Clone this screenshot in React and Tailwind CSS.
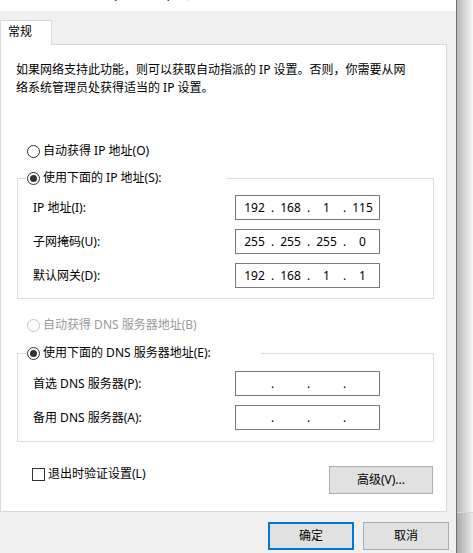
import React from "react";

const FONT = { fontFamily: '"Noto Sans", "Noto Sans CJK SC", sans-serif' };

function Radio({ checked, disabled }) {
  return (
    <span
      className={`flex h-[13px] w-[13px] shrink-0 items-center justify-center rounded-full border bg-white ${
        disabled ? "border-[#c5c5c5]" : "border-[#333333]"
      }`}
    >
      {checked && <span className="h-[7px] w-[7px] rounded-full bg-[#333333]" />}
    </span>
  );
}

function IpBox({ octets }) {
  return (
    <div className="flex h-[25px] w-[145px] items-center border border-[#7a7a7a] bg-white pl-[3px] leading-[16px]">
      {[0, 1, 2, 3].map((i) => (
        <React.Fragment key={i}>
          <span className="w-[31px] text-center">{octets ? octets[i] : ""}</span>
          {i < 3 && <span className="w-[5px] text-center">.</span>}
        </React.Fragment>
      ))}
    </div>
  );
}

function FieldRow({ label, octets }) {
  return (
    <div className="flex h-[25px] items-center">
      <div className="w-[217px] pl-[15px]">{label}</div>
      <IpBox octets={octets} />
    </div>
  );
}

function Button({ children, primary, className = "" }) {
  return (
    <div
      className={`flex h-[28px] items-center justify-center bg-[#e1e1e1] ${
        primary ? "border-2 border-[#0078d7]" : "border border-[#adadad]"
      } ${className}`}
    >
      {children}
    </div>
  );
}

export default function App() {
  return (
    <div className="flex h-[553px] w-[473px] overflow-hidden bg-white text-[12px] text-black" style={FONT}>
      {/* dialog */}
      <div className="flex w-[456px] shrink-0 flex-col bg-[#f0f0f0]">
        {/* title strip (cut off) */}
        <div className="h-[11px] overflow-hidden bg-white">
          <div className="-mt-[13px] whitespace-nowrap pl-[3px] text-[12px] leading-[16px]">
            Internet 协议版本 4 (TCP/IPv4) 属性
          </div>
        </div>

        {/* tab header */}
        <div className="flex h-[33px] items-end">
          <div className="relative z-10 -mb-px flex h-[25px] w-[52px] items-start border border-b-0 border-[#d9d9d9] bg-white pl-[7px] pt-[3px] leading-[16px]">
            常规
          </div>
        </div>

        {/* tab panel */}
        <div className="flex h-[468px] w-[447px] flex-col border border-[#d9d9d9] bg-white">
          <div className="mt-[16px] whitespace-nowrap pl-[15px] leading-[18px]">
            如果网络支持此功能，则可以获取自动指派的 IP 设置。否则，你需要从网
            <br />
            络系统管理员处获得适当的 IP 设置。
          </div>

          <div className="mt-[44px] flex h-[20px] items-center gap-[3px] pl-[26px]">
            <Radio />
            <span>自动获得 IP 地址(O)</span>
          </div>

          {/* group 1 */}
          <div className="ml-[16px] mt-[17px] flex h-[121px] w-[417px] flex-col border border-[#dcdcdc]">
            <div className="-mt-[11px] ml-[8px] flex h-[20px] w-[201px] items-center gap-[3px] bg-white pl-[1px]">
              <Radio checked />
              <span>使用下面的 IP 地址(S):</span>
            </div>
            <div className="mt-[7px] flex flex-col gap-[9px]">
              <FieldRow label="IP 地址(I):" octets={["192", "168", "1", "115"]} />
              <FieldRow label="子网掩码(U):" octets={["255", "255", "255", "0"]} />
              <FieldRow label="默认网关(D):" octets={["192", "168", "1", "1"]} />
            </div>
          </div>

          <div className="mt-[16px] flex h-[20px] items-center gap-[3px] pl-[26px] text-[#9a9a9a]">
            <Radio disabled />
            <span>自动获得 DNS 服务器地址(B)</span>
          </div>

          {/* group 2 */}
          <div className="ml-[16px] mt-[18px] flex h-[89px] w-[417px] flex-col border border-[#dcdcdc]">
            <div className="-mt-[11px] ml-[8px] flex h-[20px] w-[235px] items-center gap-[3px] bg-white pl-[1px]">
              <Radio checked />
              <span>使用下面的 DNS 服务器地址(E):</span>
            </div>
            <div className="mt-[8px] flex flex-col gap-[9px]">
              <FieldRow label="首选 DNS 服务器(P):" />
              <FieldRow label="备用 DNS 服务器(A):" />
            </div>
          </div>

          <div className="mt-[24px] flex items-start justify-between pl-[31px] pr-[13px]">
            <div className="flex h-[16px] items-center gap-[3px]">
              <span className="h-[13px] w-[13px] border border-[#333333] bg-white" />
              <span>退出时验证设置(L)</span>
            </div>
            <Button className="w-[104px]">高级(V)...</Button>
          </div>
        </div>

        {/* footer */}
        <div className="flex justify-end gap-[9px] pr-[7px] pt-[10px]">
          <Button primary className="w-[86px]">确定</Button>
          <Button className="w-[86px]">取消</Button>
        </div>
      </div>

      {/* window edge + shadow */}
      <div className="w-px shrink-0 bg-[#707070]" />
      <div className="flex flex-1 flex-col">
        <div className="h-[512px] bg-gradient-to-r from-[#b8b8b8] to-[#f8f8f8]" />
        <div className="flex-1 border-t border-[#d6d6d6] bg-gradient-to-r from-[#a9a9a9] to-[#ececec]" />
      </div>
    </div>
  );
}
